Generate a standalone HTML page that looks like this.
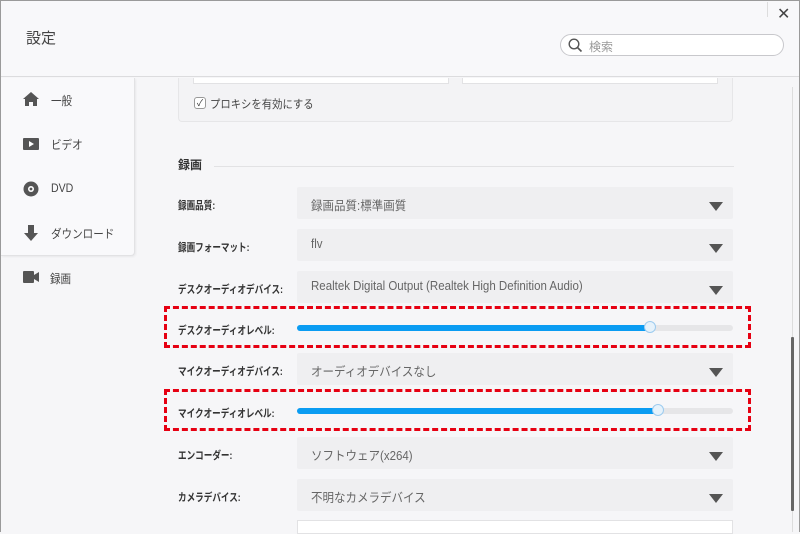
<!DOCTYPE html>
<html><head><meta charset="utf-8"><style>
*{margin:0;padding:0;box-sizing:border-box}
body{width:800px;height:532px;overflow:hidden;background:#f6f6f8;font-family:"Liberation Sans","Noto Sans CJK JP",sans-serif;position:relative;color:#333}
.win{position:absolute;left:0;top:0;width:800px;height:532px;border:1px solid #9a9a9a;border-bottom:none}
.hdr{position:absolute;left:1px;top:1px;width:798px;height:76px;background:#f8f8fa;border-bottom:1px solid #dcdcde}
.title{position:absolute;left:25px;top:26px;font-size:15px;color:#444}
.close{position:absolute;left:776px;top:3px;font-size:16px;color:#444}
.vsep{position:absolute;left:766px;top:1px;width:1px;height:15px;background:#ddd}
.search{position:absolute;left:559px;top:33px;width:224px;height:22px;border:1px solid #c8c8cc;border-radius:11px;background:#fff}
.search span{position:absolute;left:28px;top:3px;font-size:12px;color:#999}
.side{position:absolute;left:1px;top:78px;width:134px;height:178px;background:#f9f9fb;border-right:1px solid #e2e2e4;border-bottom:1px solid #e2e2e4;border-radius:0 0 4px 0;box-shadow:1px 1px 2px rgba(0,0,0,.06)}
.item{position:absolute;left:50px;font-size:12px;color:#444;transform:scaleX(.88);transform-origin:left}
.ic{position:absolute;left:22px}
.lbl{position:absolute;left:178px;font-size:11px;font-weight:bold;color:#333;white-space:nowrap;transform:scaleX(.78);transform-origin:left}
.dd{position:absolute;left:297px;width:436px;height:32px;background:#efeff1;border-radius:2px;font-size:12.5px;color:#666}
.dd span{position:absolute;left:14px;top:8px;white-space:nowrap;transform:scaleX(.92);transform-origin:left}
.dd i{position:absolute;right:10px;top:15px;border-left:7px solid transparent;border-right:7px solid transparent;border-top:9px solid #555}
.track{position:absolute;left:297px;width:436px;height:6px;background:#e6e6e8;border-radius:3px}
.fill{position:absolute;left:0;top:0;height:6px;background:#0a9cf2;border-radius:3px}
.knob{position:absolute;top:-4px;width:12px;height:12px;border-radius:50%;background:#e6f2fb;border:1px solid #9ccbef}
.red{position:absolute;left:164px;width:587px;height:42px;border:3px dashed #e60012}
</style></head><body>
<div class="win"></div>
<div class="hdr">
<div class="title">設定</div>
<div class="vsep"></div>
<div class="close">✕</div>
<div class="search"><svg style="position:absolute;left:7px;top:3px" width="15" height="15" viewBox="0 0 15 15"><circle cx="6" cy="6" r="4.8" fill="none" stroke="#555" stroke-width="1.4"/><path d="M9.5 9.5L13.5 13.5" stroke="#555" stroke-width="1.6"/></svg><span>検索</span></div>
</div>
<div class="side">
<svg class="ic" style="top:14px" width="16" height="14" viewBox="0 0 16 14"><path d="M8 0L0 7h2v7h4v-4h4v4h4V7h2z" fill="#555"/></svg>
<div class="item" style="top:14px">一般</div>
<svg class="ic" style="top:60px" width="16" height="12"><rect width="16" height="12" rx="1" fill="#555"/><path d="M6 3l5 3-5 3z" fill="#fff"/></svg>
<div class="item" style="top:58px">ビデオ</div>
<svg class="ic" style="top:103px" width="16" height="16"><circle cx="8" cy="8" r="7.5" fill="#555"/><circle cx="8" cy="8" r="3" fill="#fff"/><circle cx="8" cy="8" r="1.4" fill="#555"/></svg>
<div class="item" style="top:103px">DVD</div>
<svg class="ic" style="top:147px" width="16" height="16"><path d="M5 0h6v8h4l-7 8-7-8h4z" fill="#555"/></svg>
<div class="item" style="top:147px">ダウンロード</div>
</div>
<svg style="position:absolute;left:23px;top:271px" width="16" height="12"><rect width="11" height="12" rx="1" fill="#555"/><path d="M11 4l5-3v10l-5-3z" fill="#555"/></svg>
<div class="item" style="top:270px">録画</div>

<div style="position:absolute;left:178px;top:78px;width:555px;height:44px;border:1px solid #e6e6e8;border-top:none;border-radius:0 0 4px 4px;background:#f3f3f5"></div>
<div style="position:absolute;left:193px;top:78px;width:256px;height:6px;background:#fff;border:1px solid #e2e2e4;border-top:none"></div>
<div style="position:absolute;left:462px;top:78px;width:256px;height:6px;background:#fff;border:1px solid #e2e2e4;border-top:none"></div>
<div style="position:absolute;left:194px;top:97px;width:12px;height:12px;border:1px solid #999;border-radius:3px;background:#fff;font-size:9px;line-height:10px;text-align:center">✓</div>
<div style="position:absolute;left:210px;top:96px;font-size:11.5px;color:#444;transform:scaleX(.9);transform-origin:left">プロキシを有効にする</div>
<div style="position:absolute;left:178px;top:156px;font-size:12px;font-weight:bold">録画</div>
<div style="position:absolute;left:214px;top:166px;width:520px;height:1px;background:#e2e2e4"></div>

<div class="lbl" style="top:197px">録画品質:</div>
<div class="dd" style="top:187px"><span>録画品質:標準画質</span><i></i></div>
<div class="lbl" style="top:239px">録画フォーマット:</div>
<div class="dd" style="top:229px"><span>flv</span><i></i></div>
<div class="lbl" style="top:281px">デスクオーディオデバイス:</div>
<div class="dd" style="top:271px"><span>Realtek Digital Output (Realtek High Definition Audio)</span><i></i></div>
<div class="lbl" style="top:322px">デスクオーディオレベル:</div>
<div class="track" style="top:325px"><div class="fill" style="width:354px"></div><div class="knob" style="left:347px"></div></div>
<div class="lbl" style="top:363px">マイクオーディオデバイス:</div>
<div class="dd" style="top:353px"><span>オーディオデバイスなし</span><i></i></div>
<div class="lbl" style="top:405px">マイクオーディオレベル:</div>
<div class="track" style="top:408px"><div class="fill" style="width:362px"></div><div class="knob" style="left:355px"></div></div>
<div class="lbl" style="top:447px">エンコーダー:</div>
<div class="dd" style="top:437px"><span>ソフトウェア(x264)</span><i></i></div>
<div class="lbl" style="top:489px">カメラデバイス:</div>
<div class="dd" style="top:479px"><span>不明なカメラデバイス</span><i></i></div>
<div style="position:absolute;left:297px;top:520px;width:436px;height:14px;background:#fff;border:1px solid #e2e2e4"></div>
<div class="red" style="top:306px"></div>
<div class="red" style="top:389px"></div>
<div style="position:absolute;left:792px;top:87px;width:1px;height:445px;background:#ddd"></div>
<div style="position:absolute;left:791px;top:337px;width:3px;height:174px;background:#666;border-radius:1px"></div>
</body></html>
